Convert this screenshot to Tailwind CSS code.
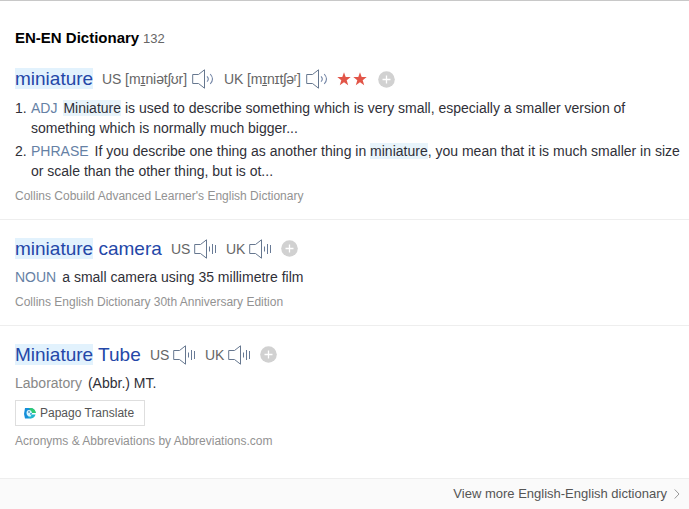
<!DOCTYPE html>
<html lang="en">
<head>
<meta charset="utf-8">
<title>EN-EN Dictionary</title>
<script src="https://cdn.jsdelivr.net/npm/@tailwindcss/browser@4"></script>
</head>
<body class="bg-white font-['Liberation_Sans',Arial,sans-serif] text-[14px] leading-5 text-[#303038] whitespace-nowrap">
<svg class="hidden">
  <symbol id="wave" viewBox="0 0 23 20"><path d="M.7 5.5h5.8l6-4.7v18.4l-6-4.7H.7z" fill="none" stroke="#66778f"/><path d="M15 7.3q2.6 2.7 0 5.4M18.2 5q4.6 5 0 10" fill="none" stroke="#7486a6" stroke-width="1.1"/></symbol>
  <symbol id="bars" viewBox="0 0 23 20"><path d="M.7 5.5h5.8l6-4.7v18.4l-6-4.7H.7z" fill="none" stroke="#66778f"/><path d="M15.5 7.5v5M18.5 5v10M21.5 6v8" fill="none" stroke="#687a96"/></symbol>
  <symbol id="star" viewBox="0 0 14 14"><path d="M7 .3l1.7 4.8h5L9.7 8.2l1.5 5L7 10.2l-4.2 3 1.5-5L.3 5.1h5z" fill="#e25548"/></symbol>
  <symbol id="plus" viewBox="0 0 17 17"><circle cx="8.5" cy="8.5" r="8.3" fill="#d1d1d1"/><path d="M8.5 4.5v8M4.5 8.5h8" stroke="#fff" stroke-width="1.3"/></symbol>
</svg>
<main class="h-[509px] flex flex-col border-t border-[#c8c8c8] overflow-hidden">
  <header class="pl-[15px] pt-[27px] h-[66px] flex items-start">
    <h1 class="w-[128px] text-[15px] font-bold text-black">EN-EN Dictionary</h1><span class="pt-px text-[13px] text-[#666]">132</span>
  </header>

  <section class="h-[153px] pl-[15px] border-b border-[#eee]">
    <div class="h-6 flex items-center text-[#666]">
      <h2 class="w-[87px] text-[19px] text-[#2447a8]"><mark class="bg-[#e2f2fd] text-inherit">miniature</mark></h2>
      <span class="w-[90px] tracking-[-0.08px]">US [m<u>ɪ</u>niətʃʊr]</span>
      <svg class="w-[23px] h-5 mr-[9px]"><use href="#wave"/></svg>
      <span class="w-[82px] tracking-[-0.15px]">UK [m<u>ɪ</u>nɪtʃəʳ]</span>
      <svg class="w-[23px] h-5 mr-2"><use href="#wave"/></svg>
      <svg class="w-[14px] h-[14px] mr-[2px]"><use href="#star"/></svg>
      <svg class="w-[14px] h-[14px] mr-[11px]"><use href="#star"/></svg>
      <svg class="w-[17px] h-[17px]"><use href="#plus"/></svg>
    </div>
    <ol class="pt-[7px]">
      <li class="flex h-[43px]"><span class="w-4">1.</span><p><span class="text-[#6681a5] mr-[6px]">ADJ</span><mark class="bg-[#e8f4fb] text-inherit">Miniature</mark> is used to describe something which is very small, especially a smaller version of<br>something which is normally much bigger...</p></li>
      <li class="flex h-[43px]"><span class="w-4">2.</span><p><span class="text-[#6681a5] mr-[6px]">PHRASE</span>If you describe one thing as another thing in <mark class="bg-[#e8f4fb] text-inherit">miniature</mark>, you mean that it is much smaller in size<br>or scale than the other thing, but is ot...</p></li>
    </ol>
    <p class="text-[12px] mt-[2px] text-[#929292]">Collins Cobuild Advanced Learner's English Dictionary</p>
  </section>

  <section class="h-[106px] pl-[15px] pt-[17px] border-b border-[#eee]">
    <div class="h-6 flex items-center text-[#666]">
      <h2 class="w-[156px] text-[19px] text-[#2447a8]"><mark class="bg-[#e2f2fd] text-inherit">miniature</mark> camera</h2>
      <span class="w-[23px]">US</span>
      <svg class="w-[23px] h-5 mr-[9px]"><use href="#bars"/></svg>
      <span class="w-[23px]">UK</span>
      <svg class="w-[23px] h-5 mr-[9px]"><use href="#bars"/></svg>
      <svg class="w-[17px] h-[17px] mb-[2px]"><use href="#plus"/></svg>
    </div>
    <p class="pt-[6px]"><span class="text-[#6681a5] mr-[6px]">NOUN</span>a small camera using 35 millimetre film</p>
    <p class="pt-[5px] text-[12px] text-[#929292]">Collins English Dictionary 30th Anniversary Edition</p>
  </section>

  <section class="h-[151px] pl-[15px] pt-[17px]">
    <div class="h-6 flex items-center text-[#666]">
      <h2 class="w-[135px] text-[19px] text-[#2447a8]"><mark class="bg-[#e2f2fd] text-inherit">Miniature</mark> Tube</h2>
      <span class="w-[23px]">US</span>
      <svg class="w-[23px] h-5 mr-[9px]"><use href="#bars"/></svg>
      <span class="w-[23px]">UK</span>
      <svg class="w-[23px] h-5 mr-[9px]"><use href="#bars"/></svg>
      <svg class="w-[17px] h-[17px] mb-[2px]"><use href="#plus"/></svg>
    </div>
    <p class="pt-[6px]"><span class="text-[#888] mr-[6px]">Laboratory</span>(Abbr.) MT.</p>
    <button class="mt-[7px] w-[130px] h-[26px] border border-[#dedede] flex items-center pl-2 text-[12px] text-[#555]">
      <svg class="w-3 h-3 mr-1" viewBox="0 0 12 12"><path d="M1 1h5q5 0 5.5 5H8L6 10l2 1-3 .5H1L0 7z" fill="#168fda"/><path d="M5 1h2q4 .5 5 5H8L6 3z" fill="#2ecb72"/><path d="M6 7.5h5.5q-1 4-5.5 4L4 10z" fill="#20b7ce"/><path d="M2.5 6q0-3 2.5-3t3 3H6.3q-.3 2 1.2 3-2 1-3.5 0-1.5-1-1.5-3z" fill="#d9f5ff"/><circle cx="5" cy="5" r=".8" fill="#18578c"/></svg>
      Papago Translate
    </button>
    <p class="pt-[5px] text-[12px] text-[#929292]">Acronyms &amp; Abbreviations by Abbreviations.com</p>
  </section>

  <footer class="mt-auto h-[31px] border-t border-[#eee] bg-[#fafafa] flex items-center justify-end pr-[9px] text-[13px] text-[#555]">
    View more English-English dictionary
    <svg class="w-[6px] h-[10px] ml-[7px]" viewBox="0 0 6 10"><path d="M.7.5L5 5 .7 9.5" fill="none" stroke="#999"/></svg>
  </footer>
</main>
</body>
</html>
